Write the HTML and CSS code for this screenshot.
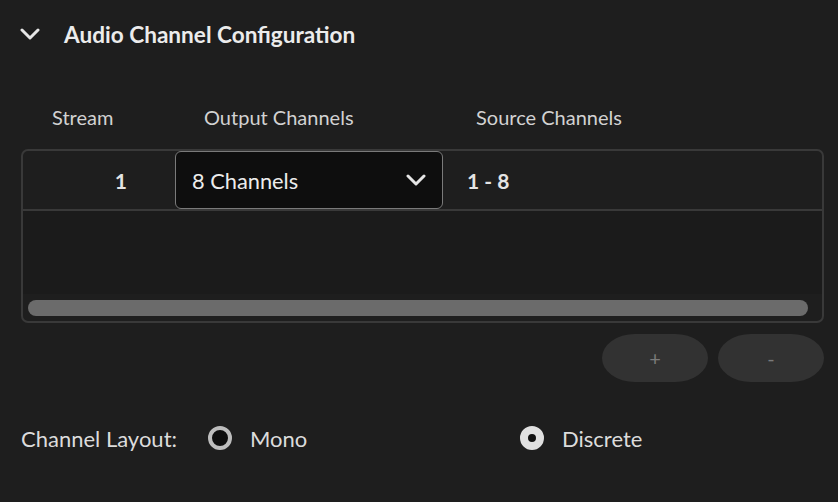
FILE: index.html
```html
<!DOCTYPE html>
<html>
<head>
<meta charset="utf-8">
<link rel="stylesheet" href="styles.css">
</head>
<body>
<div class="panel">
  <div class="section-head">
    <svg class="chev" width="20" height="12" viewBox="0 0 20 12"><path d="M2 2 L10 10 L18 2" fill="none" stroke="#e6e6e6" stroke-width="3" stroke-linecap="round" stroke-linejoin="round"/></svg>
    <span class="title">Audio Channel Configuration</span>
  </div>
  <div class="cols">
    <div class="col-h c1">Stream</div>
    <div class="col-h c2">Output Channels</div>
    <div class="col-h c3">Source Channels</div>
  </div>
  <div class="table">
    <div class="row">
      <div class="cell-stream">1</div>
      <div class="select">
        <span>8 Channels</span>
        <svg width="20" height="12" viewBox="0 0 20 12"><path d="M2 2 L10 10 L18 2" fill="none" stroke="#e6e6e6" stroke-width="3" stroke-linecap="round" stroke-linejoin="round"/></svg>
      </div>
      <div class="cell-src">1 - 8</div>
    </div>
    <div class="empty"></div>
    <div class="scroll"><div class="thumb"></div></div>
  </div>
  <div class="buttons">
    <button class="btn">+</button>
    <button class="btn">-</button>
  </div>
  <div class="layout">
    <span class="lbl">Channel Layout:</span>
    <label class="radio-opt mono"><span class="radio"></span><span>Mono</span></label>
    <label class="radio-opt"><span class="radio checked"></span><span>Discrete</span></label>
  </div>
</div>
</body>
</html>
```
FILE: styles.css
```css
html, body {
  margin: 0;
  padding: 0;
  background: #1e1e1e;
}
body {
  width: 838px;
  height: 502px;
  overflow: hidden;
  font-family: Lato, "Open Sans", sans-serif;
  color: #e4e4e4;
}
.panel {
  padding: 0 14px 0 21px;
}
.section-head {
  height: 68px;
  display: flex;
  align-items: center;
}
.chev {
  margin-left: -1px;
  margin-right: 24px;
}
.title {
  font-size: 22.6px;
  font-weight: 700;
  color: #ececec;
}
.cols {
  display: grid;
  grid-template-columns: 154px 292px 1fr;
  height: 81px;
  box-sizing: border-box;
  padding-bottom: 20px;
  align-items: end;
  font-size: 20px;
  color: #d2d2d2;
}
.c1 { padding-left: 31px; }
.c2 { padding-left: 29px; }
.c3 { padding-left: 9px; }
.table {
  border: 2px solid #393939;
  border-radius: 7px;
  height: 170px;
  display: flex;
  flex-direction: column;
}
.row {
  display: grid;
  grid-template-columns: 152px 268px 1fr;
  height: 58px;
  border-bottom: 2px solid #393939;
  align-items: center;
}
.cell-stream {
  text-align: right;
  padding-right: 48px;
  font-weight: 700;
  font-size: 21px;
}
.select {
  height: 58px;
  box-sizing: border-box;
  border: 1.5px solid #7a7a7a;
  border-radius: 6px;
  background: #0e0e0e;
  display: flex;
  align-items: center;
  justify-content: space-between;
  padding: 0 16px 0 16px;
  font-size: 21.8px;
  color: #ececec;
}
.cell-src {
  padding-left: 24px;
  font-weight: 700;
  font-size: 21px;
}
.empty {
  flex: 1;
  background: #1b1b1b;
}
.scroll {
  padding: 6px 14px 5px 5px;
}
.thumb {
  height: 16px;
  border-radius: 8px;
  background: #6b6b6b;
}
.buttons {
  display: flex;
  justify-content: flex-end;
  gap: 10px;
  margin-top: 11px;
}
.btn {
  width: 106px;
  height: 48px;
  border: none;
  border-radius: 33px / 24px;
  background: #323232;
  color: #7a7a7a;
  font-family: inherit;
  font-size: 20px;
}
.layout {
  display: flex;
  align-items: center;
  height: 50px;
  margin-top: 31px;
  font-size: 22px;
  color: #dcdcdc;
}
.lbl {
  width: 187px;
}
.radio-opt {
  display: flex;
  align-items: center;
  gap: 18px;
}
.mono {
  width: 312px;
}
.radio {
  width: 24px;
  height: 24px;
  box-sizing: border-box;
  border-radius: 50%;
  border: 4px solid #bdbdbd;
  background: #0e0e0e;
}
.radio.checked {
  border: 8px solid #e0e0e0;
  background: #111;
}
```
